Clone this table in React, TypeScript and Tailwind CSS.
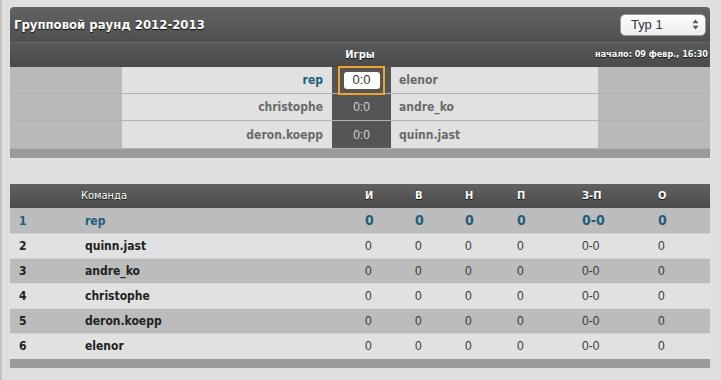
const matches = [
  { home: 'rep', away: 'elenor', score: '0:0', active: true },
  { home: 'christophe', away: 'andre_ko', score: '0:0', active: false },
  { home: 'deron.koepp', away: 'quinn.jast', score: '0:0', active: false },
];

const standings = ['rep', 'quinn.jast', 'andre_ko', 'christophe', 'deron.koepp', 'elenor'];

const cols = 'grid grid-cols-[75px_280px_50px_50px_52px_65px_76px_52px] items-center';
const shadow = '[text-shadow:0_1px_1px_rgba(0,0,0,0.85)]';
const numFirst = 'text-[14px] font-bold text-[#1b5f7b]';
const numPlain = `font-['Liberation_Sans',sans-serif] text-[12px] text-[#3a3a3a]`;

function SelectArrows() {
  return (
    <svg width="7" height="11" viewBox="0 0 7 11" className="text-[#555]">
      <path d="M3.5 0.5 L6.5 4.2 L0.5 4.2 Z" fill="currentColor" />
      <path d="M3.5 10.5 L6.5 6.8 L0.5 6.8 Z" fill="currentColor" />
    </svg>
  );
}

export default function App() {
  return (
    <div className="min-h-[380px] w-[721px] border-l-[2px] border-[#c2c2c2] bg-[#dfdfdf] pl-[8px] pt-[7px] font-['DejaVu_Sans_Condensed','DejaVu_Sans',sans-serif]">
      <div className="w-[700px]">
        {/* Title bar */}
        <div className="flex h-[35px] items-center justify-between rounded-t-[4px] bg-gradient-to-b from-[#636363] to-[#4f4f4f] pl-[4px] pr-[4px]">
          <span className={`text-[13px] font-bold text-white ${shadow}`}>Групповой раунд 2012-2013</span>
          <div className="flex h-[22px] w-[86px] items-center justify-between rounded-[5px] border border-[#9a9a9a] bg-gradient-to-b from-white to-[#ececec] pl-[10px] pr-[6px]">
            <span className="font-['Liberation_Sans',sans-serif] text-[13px] text-[#333]">Тур 1</span>
            <SelectArrows />
          </div>
        </div>

        {/* Games sub-header */}
        <div className="relative flex h-[25px] items-center justify-center border-t border-[#6a6a6a] bg-gradient-to-b from-[#595959] to-[#4a4a4a]">
          <span className={`text-[11px] font-bold text-white ${shadow}`}>Игры</span>
          <span className={`absolute right-[2px] text-[9px] font-bold text-white ${shadow}`}>начало: 09 февр., 16:30</span>
        </div>

        {/* Matches */}
        {matches.map((m, i) => (
          <div
            key={m.home}
            className={`grid h-[27px] grid-cols-[112px_210px_59px_207px_112px] ${i < 2 ? 'border-b border-[#b2b2b2]' : ''}`}
          >
            <div className="bg-[#bababa]" />
            <div className={`flex items-center justify-end bg-[#e1e1e1] pr-[9px] text-[12px] font-bold ${m.active ? 'text-[#1b5f7b]' : 'text-[#6a6a6a]'}`}>
              {m.home}
            </div>
            <div className="flex items-center justify-center bg-[#555555]">
              {m.active ? (
                <div className="relative z-10 -my-[3px] flex h-[29px] w-[47px] items-center justify-center border-[2px] border-[#f0a331]">
                  <span className="flex h-[17px] w-[36px] items-center justify-center rounded-[3px] bg-white font-['Liberation_Sans',sans-serif] text-[13px] text-[#333]">
                    {m.score}
                  </span>
                </div>
              ) : (
                <span className="font-['Liberation_Sans',sans-serif] text-[12px] text-[#d0d0d0]">{m.score}</span>
              )}
            </div>
            <div className="flex items-center bg-[#e1e1e1] pl-[8px] text-[12px] font-bold text-[#6a6a6a]">{m.away}</div>
            <div className="bg-[#bababa]" />
          </div>
        ))}
        <div className="h-[10px] border-t border-[#b2b2b2] bg-[#9b9b9b]" />

        {/* Standings */}
        <div className={`${cols} mt-[26px] h-[24px] bg-gradient-to-b from-[#616161] to-[#4b4b4b] text-[11px] text-white ${shadow}`}>
          <span />
          <span className="-ml-[4px]">Команда</span>
          <span className="font-bold">И</span>
          <span className="font-bold">В</span>
          <span className="font-bold">Н</span>
          <span className="font-bold">П</span>
          <span className="font-bold">З-П</span>
          <span className="font-bold">О</span>
        </div>
        {standings.map((name, i) => {
          const first = i === 0;
          const bg = i % 2 === 0 ? 'bg-[#bcbcbc]' : 'bg-[#e1e1e1]';
          const num = first ? numFirst : numPlain;
          return (
            <div key={name} className={`${cols} h-[25px] ${bg} ${i > 0 ? 'border-t border-[#d4d4d4]' : ''}`}>
              <span className={`pl-[9px] text-[12px] font-bold ${first ? 'text-[#1b5f7b]' : 'text-[#222]'}`}>{i + 1}</span>
              <span className={`text-[12px] font-bold ${first ? 'text-[#1b5f7b]' : 'text-[#222]'}`}>{name}</span>
              <span className={num}>0</span>
              <span className={num}>0</span>
              <span className={num}>0</span>
              <span className={num}>0</span>
              <span className={num}>0-0</span>
              <span className={num}>0</span>
            </div>
          );
        })}
        <div className="mt-[1px] h-[9px] bg-[#9b9b9b]" />
      </div>
    </div>
  );
}
